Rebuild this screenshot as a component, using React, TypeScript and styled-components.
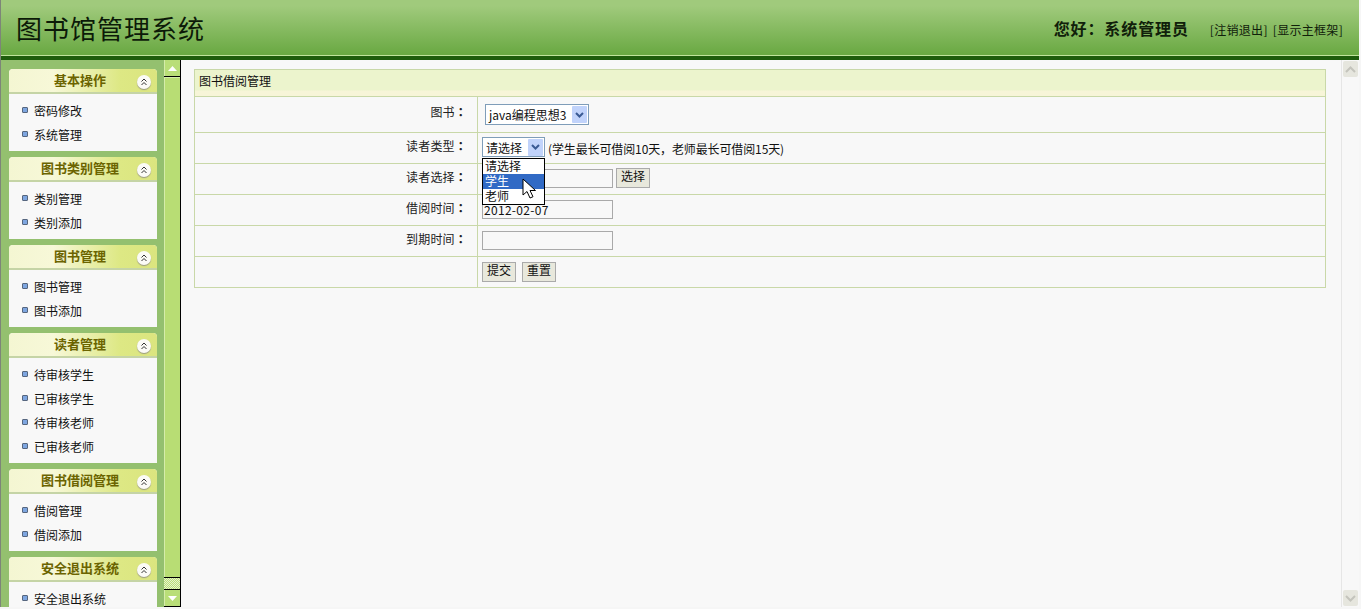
import React from 'react'
import styled, { createGlobalStyle } from 'styled-components'

const GlobalStyle = createGlobalStyle`
  html, body {
    margin: 0;
    padding: 0;
    height: 100%;
    overflow: hidden;
    background: #f6f6f6;
    font-family: "Noto Sans CJK SC", "Liberation Sans", sans-serif;
    font-size: 12px;
    color: #000;
  }
  * { box-sizing: border-box; }
`

const Page = styled.div`
  width: 1359px;
  height: 607px;
  display: flex;
  flex-direction: column;
  overflow: hidden;
  border-left: 1px solid #7d8578;
`

const Header = styled.div`
  height: 60px;
  flex: none;
  display: flex;
  align-items: center;
  justify-content: space-between;
  padding: 0 16px 5px 15px;
  background: linear-gradient(#a0ca7c 0, #a0ca7c 6px, #6aa943 54px, #6aa943 55px) no-repeat;
  background-size: 100% 55px;
  background-color: #1e5c0c;
  position: relative;
  &::after {
    content: '';
    position: absolute;
    left: 0;
    right: 0;
    top: 55px;
    height: 1px;
    background: #bfe39b;
  }
`

const Title = styled.div`
  font-size: 26px;
  letter-spacing: 1px;
  line-height: 30px;
  color: #0c1a08;
`

const HeaderRight = styled.div`
  display: flex;
  align-items: center;
  gap: 21px;
`

const Greeting = styled.div`
  font-size: 16px;
  font-weight: 700;
  letter-spacing: 0.9px;
  padding-top: 1px;
  color: #10200a;
`

const HeaderLinks = styled.div`
  display: flex;
  gap: 5px;
  font-size: 12px;
  letter-spacing: 0.3px;
  color: #10200a;
  padding-top: 4px;
`

const Main = styled.div`
  flex: 1;
  display: flex;
  min-height: 0;
`

const Sidebar = styled.div`
  width: 163px;
  flex: none;
  background: #94c06f;
  padding: 9px 0 0 8px;
  overflow: hidden;
  display: flex;
  flex-direction: column;
  gap: 6px;
`

const Panel = styled.div`
  width: 148px;
  flex: none;
  background: #f8f8f8;
  border-radius: 4px 4px 0 0;
`

const PanelHead = styled.div`
  height: 25px;
  display: flex;
  align-items: center;
  justify-content: center;
  position: relative;
  padding: 0 6px 2px 0;
  border-bottom: 2px solid #c5d4a6;
  border-radius: 4px 4px 0 0;
  background: linear-gradient(90deg, #f4f6d2 0, #f7f8d8 30%, #dde884 75%, #dbe57f 100%);
  font-size: 13px;
  font-weight: 700;
  color: #6b6400;
`

const Collapse = styled.span`
  position: absolute;
  right: 6px;
  top: 6px;
  width: 14px;
  height: 14px;
  display: flex;
  border-radius: 50%;
  background: #fbfbf6;
  box-shadow: 0 1px 1px #9a9a80;
`

const PanelBody = styled.ul`
  margin: 0;
  padding: 4px 0 5px 13px;
  list-style: none;
`

const MenuItem = styled.li`
  height: 24px;
  display: flex;
  align-items: center;
  gap: 6px;
  font-size: 12px;
  color: #111;
`

const Bullet = styled.i`
  width: 6px;
  height: 6px;
  border-radius: 1px;
  background: #7ea6e0;
  border: 1px solid #56667e;
`

const NavScroll = styled.div`
  width: 17px;
  flex: none;
  display: flex;
  flex-direction: column;
  background: #b4dc72;
  border-right: 1px solid #000;
  border-bottom: 1px solid #000;
`

const NavArrow = styled.div`
  height: 16px;
  flex: none;
  background: #b9de78;
  border-left: 1px solid #d5ecaa;
  display: flex;
  align-items: center;
  justify-content: center;
`

const NavThumb = styled.div`
  flex: 1;
  background: #b8dd74;
  border-top: 1px solid #000;
  border-bottom: 1px solid #000;
  box-shadow: inset 1px 1px 0 #d5ecaa;
`

const NavTrack = styled.div`
  height: 12px;
  flex: none;
  background: repeating-conic-gradient(#b9de78 0 25%, #e8f3cf 0 50%) 0 0 / 2px 2px;
  border-bottom: 1px solid #000;
`

const Content = styled.div`
  flex: 1;
  min-width: 0;
  display: flex;
  justify-content: space-between;
  background: #f8f8f8;
  padding: 9px 0 0 13px;
`

const FormPanel = styled.div`
  width: 1132px;
  height: 219px;
  flex: none;
  border: 1px solid #c9d8a8;
`

const FormTitle = styled.div`
  height: 27px;
  padding: 0 0 5px 4px;
  display: flex;
  align-items: center;
  background: linear-gradient(#ecf4cd 0, #ecf4cd 20px, #f7f5d8 21px);
  border-bottom: 1px solid #c9d8a8;
  font-size: 12px;
  color: #111;
`

const Row = styled.div<{ $h: number }>`
  height: ${p => p.$h}px;
  display: flex;
  border-bottom: 1px solid #c9d8a8;
  &:last-child { border-bottom: 0; }
`

const Label = styled.div`
  width: 283px;
  flex: none;
  padding: 0 10px 6px 0;
  display: flex;
  align-items: center;
  justify-content: flex-end;
  border-right: 1px solid #c9d8a8;
  color: #222;
  font-size: 12px;
  letter-spacing: 0.2px;
`

const Colon = styled.span`
  font-family: "Noto Sans CJK TC", sans-serif;
  font-weight: 700;
`

const Field = styled.div<{ $left?: number; $bottom?: number }>`
  flex: 1;
  position: relative;
  display: flex;
  align-items: center;
  gap: 3px;
  padding: 0 0 ${p => p.$bottom ?? 2}px ${p => p.$left ?? 4}px;
`

const FakeSelect = styled.div<{ $w: number; $h: number }>`
  width: ${p => p.$w}px;
  height: ${p => p.$h}px;
  flex: none;
  display: flex;
  align-items: center;
  justify-content: space-between;
  padding: 0 1px 0 3px;
  background: #fff;
  border: 1px solid #7f9db9;
  font-size: 12px;
  color: #111;
`

const SelectArrow = styled.span`
  width: 15px;
  height: 17px;
  display: flex;
  align-items: center;
  justify-content: center;
  background: #c1d3fb;
  border-radius: 1px;
`

const Hint = styled.span`
  font-size: 12px;
  letter-spacing: -0.12px;
  color: #111;
  padding-top: 2px;
`

const TextInput = styled.div`
  width: 131px;
  height: 19px;
  flex: none;
  padding-left: 1px;
  display: flex;
  align-items: center;
  border: 1px solid #a9a9a9;
  background: #f8f8f8;
  font-size: 12px;
  letter-spacing: 0.3px;
  color: #111;
`

const FormButton = styled.div<{ $gap?: number }>`
  width: 34px;
  height: 20px;
  flex: none;
  display: flex;
  align-items: center;
  justify-content: center;
  padding-bottom: 5px;
  margin-left: ${p => p.$gap ?? 0}px;
  background: #e8e8dc;
  border: 1px solid #aaa;
  font-size: 12px;
  color: #111;
`

const Dropdown = styled.div`
  position: absolute;
  left: 4px;
  top: 25px;
  width: 63px;
  height: 47px;
  background: #fff;
  border: 1px solid #000;
  z-index: 2;
`

const Option = styled.div<{ $on?: boolean }>`
  height: 15px;
  line-height: 14px;
  padding-left: 2px;
  font-size: 12px;
  background: ${p => (p.$on ? '#316ac5' : '#fff')};
  color: ${p => (p.$on ? '#fff' : '#111')};
`

const Cursor = styled.svg`
  position: absolute;
  left: 44px;
  top: 45px;
  z-index: 3;
`

const PageScroll = styled.div`
  width: 18px;
  flex: none;
  margin-top: -9px;
  display: flex;
  flex-direction: column;
  justify-content: space-between;
  background: #f8f8f8;
  border-left: 1px solid #e6e6e6;
  padding: 1px 0 1px 1px;
`

const PageArrow = styled.div`
  width: 15px;
  height: 16px;
  display: flex;
  align-items: center;
  justify-content: center;
  background: #e6e6de;
  border-radius: 2px;
`

const Chevrons = () => (
  <svg width="14" height="14" viewBox="0 0 14 14" fill="none" stroke="#333" strokeWidth="1">
    <path d="M4.5 6.5 7 4l2.5 2.5M4.5 10 7 7.5 9.5 10" />
  </svg>
)

const DownArrow = () => (
  <svg width="9" height="6" viewBox="0 0 9 6" fill="none" stroke="#3a5a94" strokeWidth="2">
    <path d="m1 1 3.5 3.5L8 1" />
  </svg>
)

const menus = [
  { title: '基本操作', items: ['密码修改', '系统管理'] },
  { title: '图书类别管理', items: ['类别管理', '类别添加'] },
  { title: '图书管理', items: ['图书管理', '图书添加'] },
  { title: '读者管理', items: ['待审核学生', '已审核学生', '待审核老师', '已审核老师'] },
  { title: '图书借阅管理', items: ['借阅管理', '借阅添加'] },
  { title: '安全退出系统', items: ['安全退出系统'] },
]

export default function App() {
  return (
    <Page>
      <GlobalStyle />
      <Header>
        <Title>图书馆管理系统</Title>
        <HeaderRight>
          <Greeting>您好：系统管理员</Greeting>
          <HeaderLinks>
            <span>[注销退出]</span>
            <span>[显示主框架]</span>
          </HeaderLinks>
        </HeaderRight>
      </Header>
      <Main>
        <Sidebar>
          {menus.map(m => (
            <Panel key={m.title}>
              <PanelHead>
                {m.title}
                <Collapse><Chevrons /></Collapse>
              </PanelHead>
              <PanelBody>
                {m.items.map(i => (
                  <MenuItem key={i}><Bullet />{i}</MenuItem>
                ))}
              </PanelBody>
            </Panel>
          ))}
        </Sidebar>
        <NavScroll>
          <NavArrow>
            <svg width="9" height="5" viewBox="0 0 9 5"><path d="M4.5 0 9 5H0z" fill="#fff" /></svg>
          </NavArrow>
          <NavThumb />
          <NavTrack />
          <NavArrow>
            <svg width="9" height="5" viewBox="0 0 9 5"><path d="M0 0h9L4.5 5z" fill="#fff" /></svg>
          </NavArrow>
        </NavScroll>
        <Content>
          <FormPanel>
            <FormTitle>图书借阅管理</FormTitle>
            <Row $h={36}>
              <Label>图书<Colon>：</Colon></Label>
              <Field $left={7} $bottom={0}>
                <FakeSelect $w={104} $h={21}>
                  java编程思想3
                  <SelectArrow><DownArrow /></SelectArrow>
                </FakeSelect>
              </Field>
            </Row>
            <Row $h={31}>
              <Label>读者类型<Colon>：</Colon></Label>
              <Field>
                <FakeSelect $w={63} $h={20}>
                  请选择
                  <SelectArrow><DownArrow /></SelectArrow>
                </FakeSelect>
                <Hint>(学生最长可借阅10天，老师最长可借阅15天)</Hint>
                <Dropdown>
                  <Option>请选择</Option>
                  <Option $on>学生</Option>
                  <Option>老师</Option>
                </Dropdown>
                <Cursor width="15" height="22" viewBox="0 0 15 22">
                  <path d="M1 1v16l4-3.5 3 6.5 3-1.3-3-6.2h5.5z" fill="#fff" stroke="#000" strokeWidth="1" />
                </Cursor>
              </Field>
            </Row>
            <Row $h={31}>
              <Label>读者选择<Colon>：</Colon></Label>
              <Field>
                <TextInput />
                <FormButton>选择</FormButton>
              </Field>
            </Row>
            <Row $h={31}>
              <Label>借阅时间<Colon>：</Colon></Label>
              <Field>
                <TextInput>2012-02-07</TextInput>
              </Field>
            </Row>
            <Row $h={31}>
              <Label>到期时间<Colon>：</Colon></Label>
              <Field>
                <TextInput />
              </Field>
            </Row>
            <Row $h={31}>
              <Label />
              <Field>
                <FormButton>提交</FormButton>
                <FormButton $gap={3}>重置</FormButton>
              </Field>
            </Row>
          </FormPanel>
          <PageScroll>
            <PageArrow>
              <svg width="11" height="7" viewBox="0 0 11 7" fill="none" stroke="#c4c4bc" strokeWidth="2"><path d="m1 6 4.5-4.5L10 6" /></svg>
            </PageArrow>
            <PageArrow>
              <svg width="11" height="7" viewBox="0 0 11 7" fill="none" stroke="#c4c4bc" strokeWidth="2"><path d="m1 1 4.5 4.5L10 1" /></svg>
            </PageArrow>
          </PageScroll>
        </Content>
      </Main>
    </Page>
  )
}
